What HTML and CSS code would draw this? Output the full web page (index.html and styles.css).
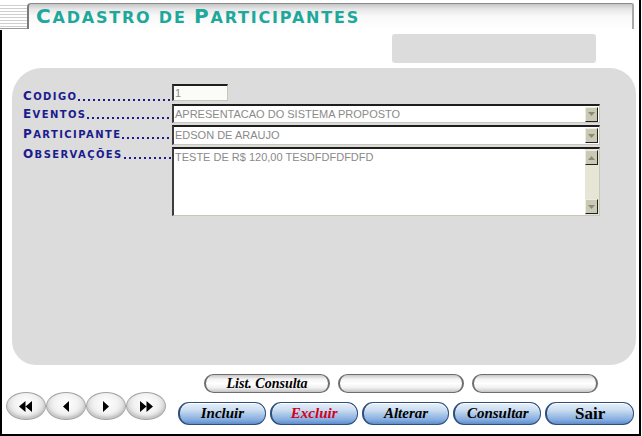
FILE: index.html
```html
<!DOCTYPE html>
<html lang="pt-BR">
<head>
<meta charset="utf-8">
<title>Cadastro de Participantes</title>
<link rel="stylesheet" href="styles.css">
</head>
<body>
<div class="page">
  <header class="top">
    <div class="grip"></div>
    <div class="titlebar"><h1 class="title"><span class="cap">C</span>adastro de <span class="cap">P</span>articipantes</h1></div>
  </header>
  <main class="main">
    <div class="statusbox"></div>
    <section class="panel">
      <div class="lbl r1"><span class="name"><span class="cap">C</span>odigo</span><span class="dots"></span></div>
      <div class="field code"><span class="val">1</span></div>

      <div class="lbl r2"><span class="name"><span class="cap">E</span>ventos</span><span class="dots"></span></div>
      <div class="field select s1"><span class="val">APRESENTACAO DO SISTEMA PROPOSTO</span><span class="dropbtn"><svg width="7" height="4" viewBox="0 0 7 4"><path d="M0 0H7L3.5 4Z" fill="#8a8a78"/></svg></span></div>

      <div class="lbl r3"><span class="name"><span class="cap">P</span>articipante</span><span class="dots"></span></div>
      <div class="field select s2"><span class="val">EDSON DE ARAUJO</span><span class="dropbtn"><svg width="7" height="4" viewBox="0 0 7 4"><path d="M0 0H7L3.5 4Z" fill="#8a8a78"/></svg></span></div>

      <div class="lbl r4"><span class="name"><span class="cap">O</span>bservações</span><span class="dots"></span></div>
      <div class="field memo"><span class="val">TESTE DE R$ 120,00 TESDFDFDFDFD</span>
        <span class="scroll">
          <span class="sbtn"><svg width="7" height="4" viewBox="0 0 7 4"><path d="M0 4H7L3.5 0Z" fill="#8a8a78"/></svg></span>
          <span class="track"></span>
          <span class="sbtn"><svg width="7" height="4" viewBox="0 0 7 4"><path d="M0 0H7L3.5 4Z" fill="#8a8a78"/></svg></span>
        </span>
      </div>
    </section>
    <footer class="actions">
      <div class="nav">
        <button class="navbtn"><svg width="14" height="11" viewBox="0 0 14 11"><path d="M0 5.5L6.5 0V11Z M6.5 5.5L13 0V11Z" fill="#000"/></svg></button>
        <button class="navbtn"><svg width="8" height="11" viewBox="0 0 8 11"><path d="M1 5.5L7 0V11Z" fill="#000"/></svg></button>
        <button class="navbtn"><svg width="8" height="11" viewBox="0 0 8 11"><path d="M7 5.5L1 0V11Z" fill="#000"/></svg></button>
        <button class="navbtn"><svg width="14" height="11" viewBox="0 0 14 11"><path d="M14 5.5L7.5 0V11Z M7.5 5.5L1 0V11Z" fill="#000"/></svg></button>
      </div>
      <div class="cmds">
        <div class="cmds-top">
          <button class="pill silver">List. Consulta</button>
          <button class="pill silver"></button>
          <button class="pill silver"></button>
        </div>
        <div class="cmds-bottom">
          <button class="pill blue">Incluir</button>
          <button class="pill blue red">Excluir</button>
          <button class="pill blue">Alterar</button>
          <button class="pill blue">Consultar</button>
          <button class="pill blue sair">Sair</button>
        </div>
      </div>
    </footer>
  </main>
</div>
</body>
</html>
```
FILE: styles.css
```css
* { box-sizing: border-box; }
html, body { margin: 0; padding: 0; background: #fff; }
.page {
  width: 641px;
  height: 436px;
  border-right: 2px solid #000;
  display: flex;
  flex-direction: column;
}
.top {
  height: 30px;
  display: flex;
  align-items: flex-start;
  padding-top: 3px;
}
.grip {
  width: 27px;
  height: 26px;
  background: repeating-linear-gradient(to bottom, #ffffff 0, #ffffff 2px, #cfcfcf 2px, #cfcfcf 3px);
  border-bottom: 1px solid #9a9a9a;
}
.titlebar {
  width: 607px;
  height: 26px;
  border-top: 1px solid #8a8a8a;
  border-left: 2px solid #7a7a7a;
  border-right: 2px solid #a8a8a8;
  border-top-left-radius: 4px;
  border-top-right-radius: 2px;
  background: linear-gradient(to bottom, #c6c6c6 0, #e6e6e6 5px, #f8f8f8 12px, #ffffff 100%);
  padding-left: 7px;
  padding-top: 1px;
}
.title {
  margin: 0;
  font-family: "DejaVu Sans", sans-serif;
  font-weight: bold;
  text-transform: uppercase;
  font-size: 16px;
  letter-spacing: 1.8px;
  line-height: 23px;
  color: #1ea89b;
  white-space: nowrap;
}
.title .cap { font-size: 20px; }
.main {
  height: 406px;
  border-left: 2px solid #000;
  border-bottom: 2px solid #000;
  display: flex;
  flex-direction: column;
}
.statusbox {
  margin-top: 4px;
  margin-left: 390px;
  width: 204px;
  height: 29px;
  background: #dcdcdc;
  border-radius: 3px;
}
.panel {
  margin-top: 5px;
  margin-left: 10px;
  width: 624px;
  height: 297px;
  background: #dcdcdc;
  border-radius: 30px 26px 26px 24px;
  padding: 16px 0 0 11px;
  display: grid;
  grid-template-columns: 149px 428px;
  grid-template-rows: 18px 19px 20px 69px;
  row-gap: 2px;
  align-content: start;
}
.lbl {
  display: flex;
  align-items: flex-end;
  white-space: nowrap;
  font-family: "DejaVu Sans", sans-serif;
  font-weight: bold;
  text-transform: uppercase;
  color: #1b1b8e;
  align-self: start;
}
.lbl.r1 { margin-top: 5px; }
.lbl.r2 { margin-top: 3px; }
.lbl.r3 { margin-top: 2px; }
.lbl.r4 { margin-top: 0; }
.lbl .name {
  flex: none;
  font-size: 10px;
  line-height: 14px;
  letter-spacing: 1.4px;
}
.lbl .cap { font-size: 12px; }
.lbl .dots {
  flex: 1;
  height: 2px;
  margin-bottom: 3px;
  margin-left: 1px;
  background-image: linear-gradient(to right, #1b1b8e 0, #1b1b8e 2px, transparent 2px);
  background-size: 5px 2px;
  background-repeat: repeat-x;
}
.field {
  display: flex;
  align-items: flex-start;
  background: #fff;
  border-top: 2px solid #1e1e1e;
  border-left: 2px solid #3c3c3c;
  border-bottom: 1px solid #c8c8b8;
  border-right: 1px solid #c8c8b8;
  font-family: "Liberation Sans", Arial, sans-serif;
  font-size: 11px;
  line-height: 13px;
  color: #8a8a8a;
}
.field .val { flex: 1; padding-left: 1px; padding-top: 1px; white-space: nowrap; overflow: hidden; }
.code { width: 56px; height: 17px; background: #fbfbf8; }
.select { align-items: stretch; }
.select .val { align-self: center; padding-top: 0; }
.dropbtn, .sbtn {
  flex: none;
  width: 13px;
  height: 15px;
  display: flex;
  align-items: center;
  justify-content: center;
  background: #cacab4;
  border-top: 1px solid #ecece0;
  border-left: 1px solid #ecece0;
  border-right: 1px solid #202020;
  border-bottom: 1px solid #202020;
}
.select .dropbtn { align-self: center; margin-right: 1px; }
.memo { align-items: stretch; }
.memo .val { padding-top: 2px; }
.scroll {
  flex: none;
  width: 14px;
  display: flex;
  flex-direction: column;
  background: #e6e6d6;
  padding: 1px 1px 1px 0;
}
.scroll .track { flex: 1; }
.actions {
  display: flex;
  padding: 9px 0 0 4px;
}
.nav {
  width: 160px;
  height: 28px;
  margin-top: 18px;
  display: flex;
}
.navbtn {
  width: 40px;
  height: 28px;
  padding: 0;
  border: 1px solid #a4a4a4;
  border-radius: 50%;
  background: radial-gradient(ellipse at 50% 40%, #ffffff 0, #f2f2f2 45%, #d2d2d2 80%, #bdbdbd 100%);
  box-shadow: inset 0 -2px 3px #c0c0c0;
  display: flex;
  align-items: center;
  justify-content: center;
}
.cmds {
  margin-left: 12px;
  width: 456px;
  display: flex;
  flex-direction: column;
}
.cmds-top {
  display: flex;
  gap: 8px;
  padding-left: 26px;
}
.cmds-bottom {
  display: flex;
  gap: 4px;
  margin-top: 9px;
}
.pill {
  font-family: "Liberation Serif", "Times New Roman", serif;
  font-weight: bold;
  font-style: italic;
  color: #000;
  padding: 0;
  display: flex;
  align-items: center;
  justify-content: center;
}
.silver {
  width: 126px;
  height: 19px;
  font-size: 14px;
  border: 1px solid #6e6e6e;
  border-left-width: 2px;
  border-right-width: 2px;
  border-radius: 10px;
  background: linear-gradient(to bottom, #c8c8c8 0, #f4f4f4 25%, #ffffff 50%, #f0f0f0 75%, #c4c4c4 100%);
}
.blue {
  width: 88px;
  height: 23px;
  font-size: 15px;
  border: 1px solid #2f4f7e;
  border-left-width: 2px;
  border-radius: 11px;
  background: linear-gradient(to bottom, #e9f1f9 0, #c9dcf0 35%, #a9c6e8 55%, #86ade0 80%, #5d8ccc 100%);
  box-shadow: inset 0 1px 0 #ffffff;
}
.red { color: #d4001c; }
.sair { width: 89px; font-style: normal; font-size: 17px; }
```
